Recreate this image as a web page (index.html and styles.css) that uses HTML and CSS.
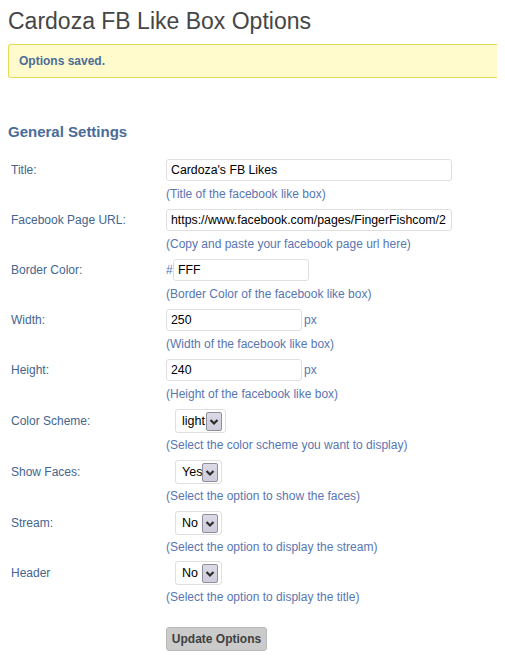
FILE: index.html
```html
<!DOCTYPE html>
<html lang="en">
<head>
<meta charset="utf-8">
<title>Cardoza FB Like Box Options</title>
<link rel="stylesheet" href="styles.css">
</head>
<body>
<div class="wrap">
  <h1 class="page-title">Cardoza FB Like Box Options</h1>
  <div class="notice"><p>Options saved.</p></div>
  <h3 class="section-title">General Settings</h3>
  <form class="form">
    <div class="row">
      <label class="label">Title:</label>
      <div class="field">
        <div class="control"><input class="text w-wide" type="text" value="Cardoza's FB Likes"></div>
        <p class="desc">(Title of the facebook like box)</p>
      </div>
    </div>
    <div class="row">
      <label class="label">Facebook Page URL:</label>
      <div class="field">
        <div class="control"><input class="text w-wide" type="text" value="https://www.facebook.com/pages/FingerFishcom/2"></div>
        <p class="desc">(Copy and paste your facebook page url here)</p>
      </div>
    </div>
    <div class="row">
      <label class="label">Border Color:</label>
      <div class="field">
        <div class="control"><span class="prefix">#</span><input class="text w-short" type="text" value="FFF"></div>
        <p class="desc">(Border Color of the facebook like box)</p>
      </div>
    </div>
    <div class="row">
      <label class="label">Width:</label>
      <div class="field">
        <div class="control"><input class="text w-short" type="text" value="250"><span class="suffix">px</span></div>
        <p class="desc">(Width of the facebook like box)</p>
      </div>
    </div>
    <div class="row">
      <label class="label">Height:</label>
      <div class="field">
        <div class="control"><input class="text w-short" type="text" value="240"><span class="suffix">px</span></div>
        <p class="desc">(Height of the facebook like box)</p>
      </div>
    </div>
    <div class="row row-select">
      <label class="label">Color Scheme:</label>
      <div class="field">
        <div class="control">
          <div class="select s-light"><span>light</span><span class="arrow"><svg width="14" height="17" viewBox="0 0 14 17"><path d="M3.5 7 L7 10.5 L10.5 7" fill="none" stroke="#2d2d2d" stroke-width="2.2"/></svg></span></div>
        </div>
        <p class="desc">(Select the color scheme you want to display)</p>
      </div>
    </div>
    <div class="row row-select">
      <label class="label">Show Faces:</label>
      <div class="field">
        <div class="control">
          <div class="select s-yn"><span>Yes</span><span class="arrow"><svg width="14" height="17" viewBox="0 0 14 17"><path d="M3.5 7 L7 10.5 L10.5 7" fill="none" stroke="#2d2d2d" stroke-width="2.2"/></svg></span></div>
        </div>
        <p class="desc">(Select the option to show the faces)</p>
      </div>
    </div>
    <div class="row row-select">
      <label class="label">Stream:</label>
      <div class="field">
        <div class="control">
          <div class="select s-yn"><span>No</span><span class="arrow"><svg width="14" height="17" viewBox="0 0 14 17"><path d="M3.5 7 L7 10.5 L10.5 7" fill="none" stroke="#2d2d2d" stroke-width="2.2"/></svg></span></div>
        </div>
        <p class="desc">(Select the option to display the stream)</p>
      </div>
    </div>
    <div class="row row-select row-last">
      <label class="label">Header</label>
      <div class="field">
        <div class="control">
          <div class="select s-yn"><span>No</span><span class="arrow"><svg width="14" height="17" viewBox="0 0 14 17"><path d="M3.5 7 L7 10.5 L10.5 7" fill="none" stroke="#2d2d2d" stroke-width="2.2"/></svg></span></div>
        </div>
        <p class="desc">(Select the option to display the title)</p>
      </div>
    </div>
    <div class="row row-submit">
      <span class="label"></span>
      <div class="field">
        <button type="button" class="button">Update Options</button>
      </div>
    </div>
  </form>
</div>
</body>
</html>
```
FILE: styles.css
```css
body {
  margin: 8px 8px 0;
  background: #ffffff;
  font-family: "Liberation Sans", Arial, sans-serif;
  font-size: 12px;
  color: #333;
}
.page-title {
  margin: 0;
  font-size: 23px;
  line-height: 26px;
  font-weight: normal;
  color: #464646;
}
.notice {
  margin: 10px -8px 0 0;
  background: #fffbcc;
  border: 1px solid #e6db55;
  border-right-width: 0;
  border-radius: 3px 0 0 3px;
}
.notice p {
  margin: 0;
  padding: 9px 10px 8px;
  font-size: 12px;
  line-height: 15px;
  font-weight: bold;
  color: #4b6c98;
}
.section-title {
  margin: 45px 0 0;
  font-size: 15px;
  line-height: 18px;
  font-weight: bold;
  color: #4a6c99;
}
.form {
  margin-top: 18px;
}
.row {
  display: grid;
  grid-template-columns: 158px 1fr;
  padding-bottom: 7px;
}
.label {
  padding-left: 3px;
  line-height: 22px;
  color: #44658f;
  font-size: 12px;
}
.row-select .label {
  line-height: 24px;
}
.control {
  display: flex;
  align-items: center;
  height: 22px;
}
.row-select .control {
  height: 24px;
  padding-left: 9px;
}
.row-last {
  margin-top: -1px;
}
.desc {
  margin: 6px 0 0;
  line-height: 15px;
  font-size: 12px;
  color: #5876b2;
}
.row-select .desc {
  margin-top: 5px;
}
.text {
  box-sizing: border-box;
  height: 22px;
  margin: 0;
  padding: 0 4px;
  border: 1px solid #dfdfdf;
  border-radius: 3px;
  background: #fff;
  font-family: "Liberation Sans", Arial, sans-serif;
  font-size: 12.3px;
  color: #000;
  outline: none;
}
.w-wide {
  width: 286px;
}
.w-short {
  width: 136px;
}
.prefix {
  width: 7px;
  color: #5876b2;
  font-size: 12px;
}
.suffix {
  margin-left: 2px;
  color: #5876b2;
  font-size: 12px;
}
.select {
  box-sizing: border-box;
  height: 24px;
  display: flex;
  align-items: center;
  justify-content: space-between;
  padding: 0 3px 0 6px;
  border: 1px solid #dfdfdf;
  border-radius: 3px;
  background: #fff;
  font-size: 12.5px;
  color: #000;
}
.s-light {
  width: 51px;
}
.s-yn {
  width: 47px;
}
.arrow {
  box-sizing: border-box;
  width: 16px;
  height: 19px;
  display: flex;
  align-items: center;
  justify-content: center;
  border: 1px solid #8e8e9c;
  border-radius: 2px;
  background: linear-gradient(#dcdae6, #cfccdc);
}
.row-submit {
  padding-top: 15px;
  padding-bottom: 0;
}
.button {
  box-sizing: border-box;
  width: 101px;
  height: 24px;
  margin: 0;
  padding: 0;
  border: 1px solid #b9b9b9;
  border-radius: 3px;
  background: #cbcbcb;
  font-family: "Liberation Sans", Arial, sans-serif;
  font-size: 12px;
  font-weight: bold;
  color: #3f3f3f;
}
```
